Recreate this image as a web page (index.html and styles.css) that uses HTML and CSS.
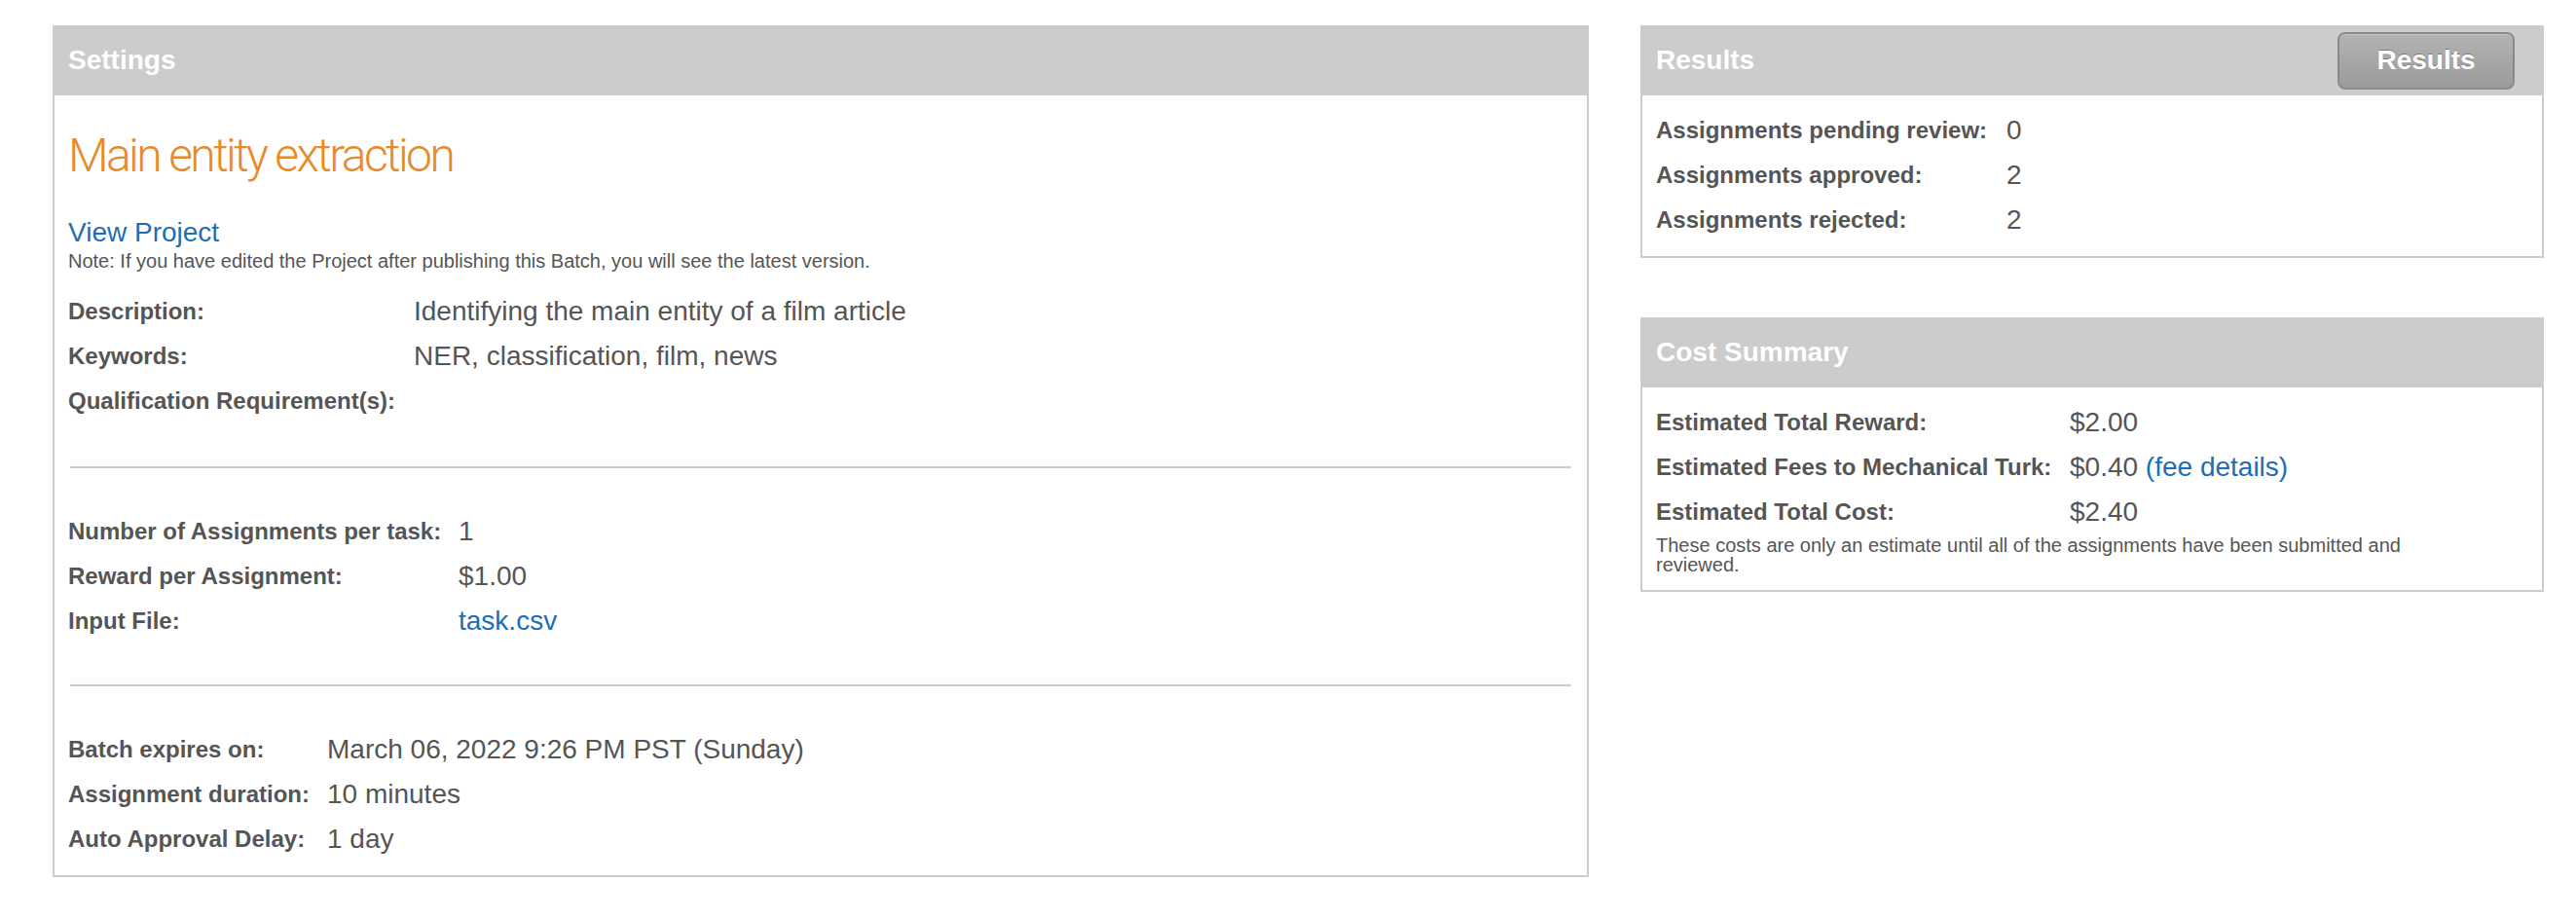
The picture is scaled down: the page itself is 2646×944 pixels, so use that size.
FILE: index.html
```html
<!DOCTYPE html>
<html lang="en">
<head>
<meta charset="utf-8">
<title>Batch details</title>
<link rel="stylesheet" href="styles.css">
</head>
<body>
<div class="page">
  <section class="panel panel-settings">
    <header class="panel-head"><h2 class="panel-title">Settings</h2></header>
    <div class="panel-body">
      <h1 class="project-title">Main entity extraction</h1>
      <a class="view-link" href="#">View Project</a>
      <p class="note">Note: If you have edited the Project after publishing this Batch, you will see the latest version.</p>
      <div class="group group-first">
        <dl class="kv kv-desc">
          <dt>Description:</dt><dd>Identifying the main entity of a film article</dd>
          <dt>Keywords:</dt><dd>NER, classification, film, news</dd>
          <dt>Qualification Requirement(s):</dt><dd></dd>
        </dl>
      </div>
      <hr class="divider">
      <div class="group">
        <dl class="kv kv-task">
          <dt>Number of Assignments per task:</dt><dd>1</dd>
          <dt>Reward per Assignment:</dt><dd>$1.00</dd>
          <dt>Input File:</dt><dd><a class="link" href="#">task.csv</a></dd>
        </dl>
      </div>
      <hr class="divider">
      <div class="group group-last">
        <dl class="kv kv-time">
          <dt>Batch expires on:</dt><dd>March 06, 2022 9:26 PM PST (Sunday)</dd>
          <dt>Assignment duration:</dt><dd>10 minutes</dd>
          <dt>Auto Approval Delay:</dt><dd>1 day</dd>
        </dl>
      </div>
    </div>
  </section>

  <div class="side">
    <section class="panel">
      <header class="panel-head panel-head-btn">
        <h2 class="panel-title">Results</h2>
        <button class="results-btn" type="button">Results</button>
      </header>
      <div class="panel-body side-body">
        <dl class="kv kv-results">
          <dt>Assignments pending review:</dt><dd>0</dd>
          <dt>Assignments approved:</dt><dd>2</dd>
          <dt>Assignments rejected:</dt><dd>2</dd>
        </dl>
      </div>
    </section>

    <section class="panel">
      <header class="panel-head"><h2 class="panel-title">Cost Summary</h2></header>
      <div class="panel-body side-body cost-body">
        <dl class="kv kv-cost">
          <dt>Estimated Total Reward:</dt><dd>$2.00</dd>
          <dt>Estimated Fees to Mechanical Turk:</dt><dd>$0.40 <a class="link" href="#">(fee details)</a></dd>
          <dt>Estimated Total Cost:</dt><dd>$2.40</dd>
        </dl>
        <p class="cost-note">These costs are only an estimate until all of the assignments have been submitted and reviewed.</p>
      </div>
    </section>
  </div>
</div>
</body>
</html>
```

FILE: styles.css
```css
* {
  box-sizing: border-box;
}

html,
body {
  margin: 0;
  padding: 0;
  background: #fff;
}

body {
  font-family: "Liberation Sans", Arial, Helvetica, sans-serif;
  color: #555;
}

.page {
  display: flex;
  align-items: flex-start;
  gap: 53px;
  padding: 26px 0 0 54px;
}

.panel-settings {
  width: 1578px;
}

.side {
  width: 928px;
  display: flex;
  flex-direction: column;
  gap: 61px;
}

.panel-head {
  height: 72px;
  background: #ccc;
  display: flex;
  align-items: center;
  justify-content: space-between;
  padding: 0 16px;
}

.panel-head-btn {
  padding-right: 30px;
}

.panel-title {
  margin: 0;
  font-size: 28px;
  font-weight: 700;
  line-height: 32px;
  color: #fff;
}

.panel-body {
  display: flow-root;
  border: 2px solid #ccc;
  border-top: 0;
  padding: 0 14px;
}

.project-title {
  margin: 34px 0 0;
  font-family: Roboto, "Liberation Sans", sans-serif;
  font-weight: 300;
  font-size: 48px;
  line-height: 56px;
  letter-spacing: -2.6px;
  color: #e68a2c;
}

.view-link {
  display: block;
  width: max-content;
  margin-top: 33px;
  font-size: 28px;
  line-height: 36px;
  color: #236cb4;
  text-decoration: none;
}

.link {
  color: #236cb4;
  text-decoration: none;
}

.note {
  margin: 1px 0 0;
  font-size: 20px;
  line-height: 20px;
}

.kv {
  display: grid;
  grid-auto-rows: 46px;
  align-items: center;
  margin: 0;
}

.kv dt {
  font-size: 24px;
  font-weight: 700;
  white-space: nowrap;
}

.kv dd {
  margin: 0;
  font-size: 28px;
  white-space: nowrap;
}

.kv-desc {
  grid-template-columns: 355px 1fr;
}

.kv-task {
  grid-template-columns: 401px 1fr;
}

.kv-time {
  grid-template-columns: 266px 1fr;
}

.kv-results {
  grid-template-columns: 360px 1fr;
}

.kv-cost {
  grid-template-columns: 425px 1fr;
}

.group {
  padding: 42px 0;
}

.group-first {
  margin-top: 19px;
  padding: 0 0 44px;
}

.group-last {
  padding: 42px 0 14px;
}

.divider {
  display: block;
  height: 2px;
  margin: 0 2px;
  border: 0;
  background: #ccc;
}

.side-body {
  padding: 13px 14px 14px;
}

.cost-body {
  padding-bottom: 16px;
}

.cost-note {
  margin: 1px 0 0;
  max-width: 800px;
  font-size: 20px;
  line-height: 20px;
}

.results-btn {
  width: 182px;
  height: 59px;
  margin: 0;
  padding: 0;
  border: 2px solid #8a8a8a;
  border-radius: 8px;
  background: linear-gradient(#b3b3b3, #9b9b9b);
  box-shadow: inset 0 1px 0 rgba(255, 255, 255, 0.25);
  color: #fff;
  font-family: "Liberation Sans", Arial, sans-serif;
  font-size: 28px;
  font-weight: 700;
  text-shadow: 0 -1px 0 rgba(0, 0, 0, 0.3);
  cursor: pointer;
}
```
